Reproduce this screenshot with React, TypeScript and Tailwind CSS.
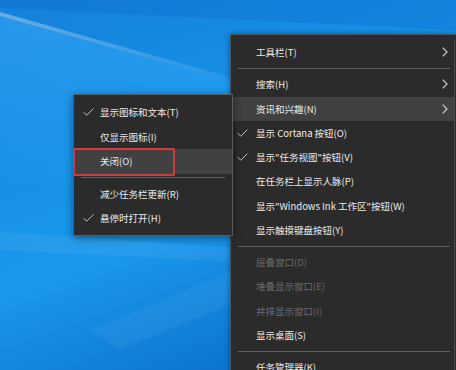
import React from 'react'

const font = { fontFamily: '"Noto Sans CJK SC", "Noto Sans", sans-serif' }

type Item =
  | { kind: 'sep' }
  | { kind: 'item'; label: string; check?: boolean; arrow?: boolean; active?: boolean; disabled?: boolean }

const mainItems: Item[] = [
  { kind: 'item', label: '工具栏(T)', arrow: true },
  { kind: 'sep' },
  { kind: 'item', label: '搜索(H)', arrow: true },
  { kind: 'item', label: '资讯和兴趣(N)', arrow: true, active: true },
  { kind: 'item', label: '显示 Cortana 按钮(O)', check: true },
  { kind: 'item', label: '显示"任务视图"按钮(V)', check: true },
  { kind: 'item', label: '在任务栏上显示人脉(P)' },
  { kind: 'item', label: '显示"Windows Ink 工作区"按钮(W)' },
  { kind: 'item', label: '显示触摸键盘按钮(Y)' },
  { kind: 'sep' },
  { kind: 'item', label: '层叠窗口(D)', disabled: true },
  { kind: 'item', label: '堆叠显示窗口(E)', disabled: true },
  { kind: 'item', label: '并排显示窗口(I)', disabled: true },
  { kind: 'item', label: '显示桌面(S)' },
  { kind: 'sep' },
  { kind: 'item', label: '任务管理器(K)' },
]

const subItems: Item[] = [
  { kind: 'item', label: '显示图标和文本(T)', check: true },
  { kind: 'item', label: '仅显示图标(I)' },
  { kind: 'item', label: '关闭(O)', active: true },
  { kind: 'sep' },
  { kind: 'item', label: '减少任务栏更新(R)' },
  { kind: 'item', label: '悬停时打开(H)', check: true },
]

function Check() {
  return (
    <svg width="11" height="8" viewBox="0 0 11 8" fill="none">
      <path d="M0.6 4.2 L3.8 7.2 L10.4 0.6" stroke="#d0d0d0" strokeWidth="0.9" />
    </svg>
  )
}

function Chevron() {
  return (
    <svg width="6" height="10" viewBox="0 0 6 10" fill="none">
      <path d="M0.7 0.7 L5 5 L0.7 9.3" stroke="#cfcfcf" strokeWidth="1.2" />
    </svg>
  )
}

function Menu({ items, sepClass, checkClass, rowClass }: { items: Item[]; sepClass: string; checkClass: string; rowClass: string }) {
  return (
    <div className="flex flex-col">
      {items.map((it, i) =>
        it.kind === 'sep' ? (
          <div key={i} className={`h-[8px] flex items-center ${sepClass}`}>
            <div className="h-px w-full bg-[#5e5e5e]" />
          </div>
        ) : (
          <div
            key={i}
            className={`relative flex items-center text-[9.5px] ${rowClass} ${it.active ? 'bg-[#414141]' : ''} ${it.disabled ? 'text-[#6a6a6a]' : 'text-[#ececec]'}`}
          >
            <div className={`flex items-center ${checkClass}`}>{it.check && <Check />}</div>
            <span className="whitespace-nowrap">{it.label}</span>
            {it.arrow && (
              <div className="absolute right-[6px] top-1/2 -translate-y-1/2 flex">
                <Chevron />
              </div>
            )}
          </div>
        )
      )}
    </div>
  )
}

export default function App() {
  return (
    <div
      className="relative w-[456px] h-[370px] overflow-hidden bg-[linear-gradient(160deg,#1580d8_0%,#168fe4_30%,#1a98ec_55%,#0f79d3_80%,#0a67c4_100%)]"
      style={font}
    >
      {/* wallpaper light beams */}
      <svg className="absolute inset-0" width="456" height="370" viewBox="0 0 456 370">
        <defs>
          <linearGradient id="beam" x1="0" y1="0" x2="1" y2="0">
            <stop offset="0" stopColor="#ffffff" stopOpacity="0.35" />
            <stop offset="1" stopColor="#ffffff" stopOpacity="0.05" />
          </linearGradient>
          <linearGradient id="glow" x1="0" y1="0" x2="0" y2="1">
            <stop offset="0" stopColor="#3fb2ff" stopOpacity="0.45" />
            <stop offset="1" stopColor="#3fb2ff" stopOpacity="0" />
          </linearGradient>
        </defs>
        <polygon points="0,12 240,80 240,84 0,16" fill="url(#beam)" />
        <polygon points="0,16 240,84 240,200 0,180" fill="url(#glow)" />
        <polygon points="0,232 240,248 240,262 0,250" fill="#ffffff" opacity="0.06" />
        <polygon points="90,330 240,268 240,300 120,350" fill="#ffffff" opacity="0.05" />
        <polygon points="0,0 456,0 456,30 0,8" fill="#0b6acb" opacity="0.35" />
      </svg>

      {/* main taskbar context menu */}
      <div className="absolute left-[230px] top-[34px] w-[226px] h-[360px] bg-[#2b2b2b] border border-[#555] border-r-0 pt-[5px] shadow-[0_0_6px_rgba(0,0,0,0.4)]">
        <div className="mr-[1px] border-r border-[#4a4a4a] h-full">
          <Menu items={mainItems} sepClass="pl-[7px] pr-[4px]" checkClass="w-[25px] pl-[6px]" rowClass="h-[24.25px]" />
        </div>
      </div>

      {/* news & interests submenu */}
      <div className="absolute left-[73px] top-[94px] w-[160px] bg-[#2b2b2b] border border-[#5b5b5b] pt-[5px] pb-[4px] shadow-[0_2px_8px_rgba(0,0,0,0.45)]">
        <Menu items={subItems} sepClass="pl-[7px] pr-[7px]" checkClass="w-[26px] pl-[9px]" rowClass="h-[24.5px]" />
        <div className="absolute left-[-1px] top-[53px] w-[102px] h-[28px] border-2 border-[#d9363e] rounded-[1px]" />
      </div>
    </div>
  )
}
